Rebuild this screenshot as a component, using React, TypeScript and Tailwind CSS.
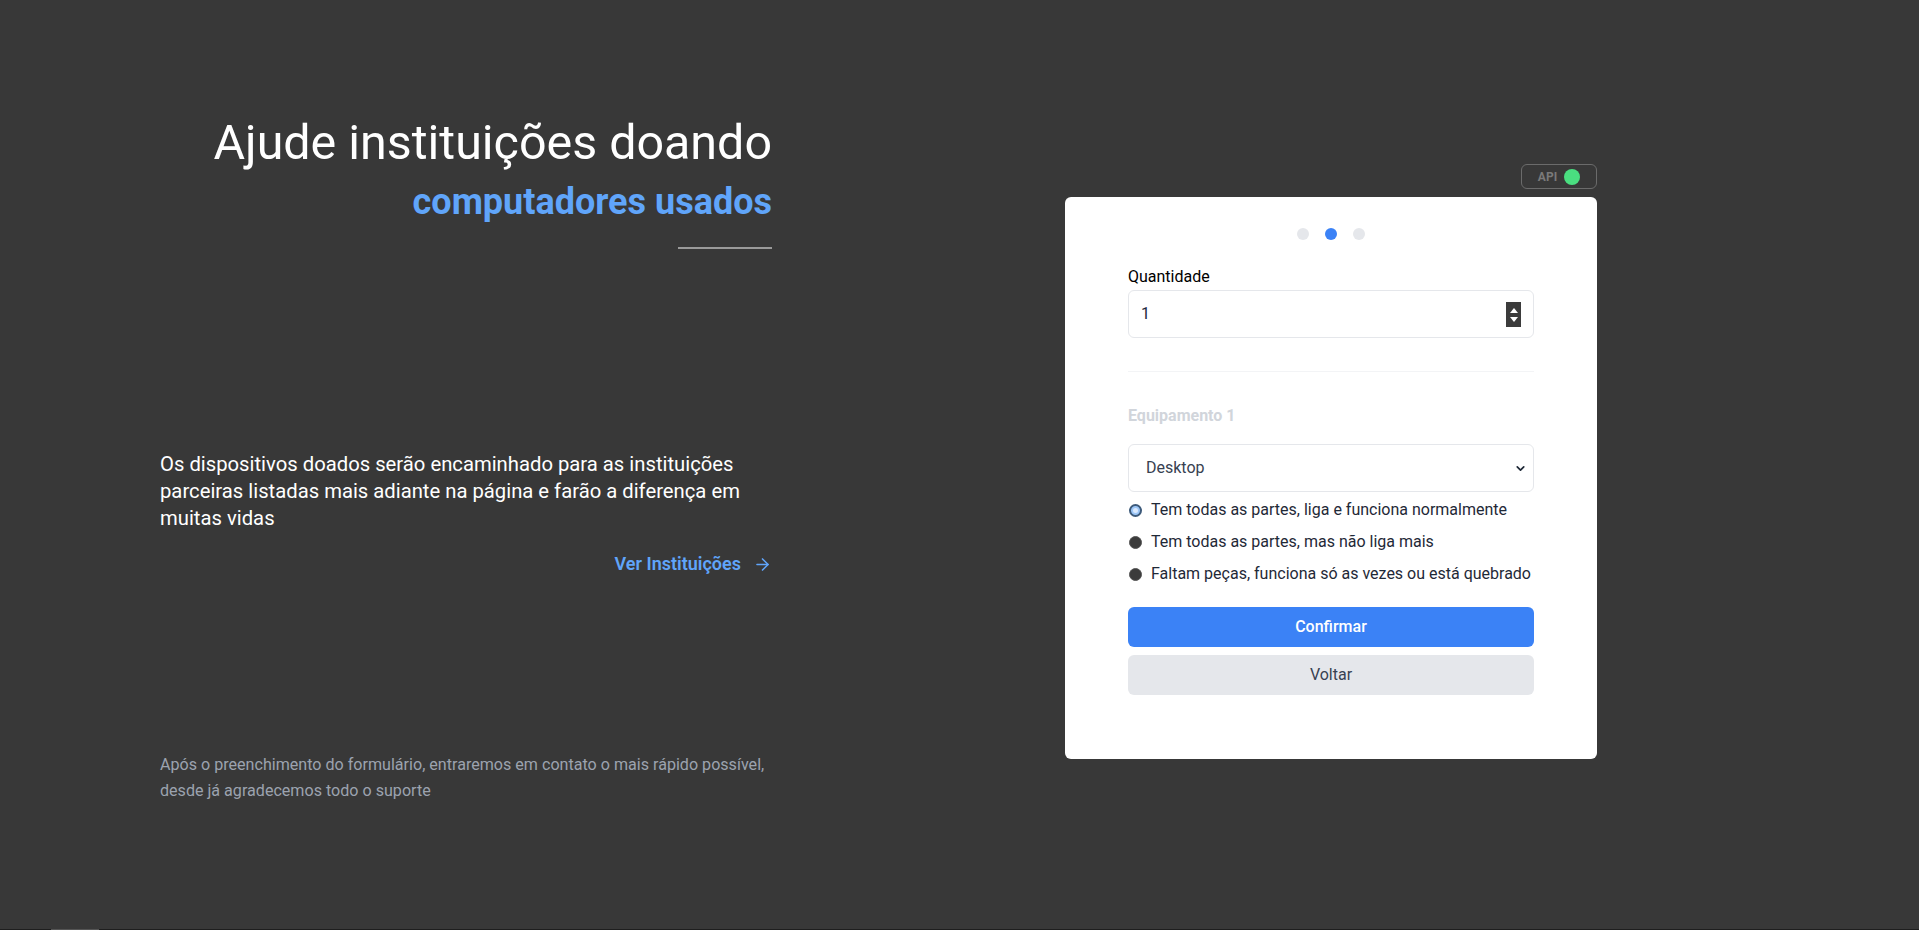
import React from "react";
import { ArrowRight, ChevronDown } from "lucide-react";

export default function App() {
  return (
    <div className="relative flex h-[930px] w-full flex-col overflow-hidden bg-[#383838] [font-family:Roboto,'Noto_Sans',sans-serif]">
      <main className="flex flex-1 pl-[160px]">
        {/* Left column */}
        <section className="flex w-[612px] flex-col pt-[119px]">
          <h1 className="text-right text-[48.4px] font-normal leading-[48px] text-white">
            Ajude instituições doando
          </h1>
          <h2 className="mt-[15px] text-right text-[36px] font-bold leading-[40px] text-[#60a5fa]">
            computadores usados
          </h2>
          <div className="mt-[25px] flex justify-end">
            <div className="h-[2px] w-[94px] bg-[#9a9a9a]" />
          </div>
          <p className="mt-[202px] text-[20.25px] leading-[27px] text-white">
            Os dispositivos doados serão encaminhado para as instituições parceiras listadas mais
            adiante na página e farão a diferença em muitas vidas
          </p>
          <div className="mt-[20px] flex justify-end">
            <a className="flex items-center gap-3 text-[18px] font-semibold leading-6 text-[#60a5fa]">
              Ver Instituições
              <ArrowRight size={19} strokeWidth={2} />
            </a>
          </div>
          <p className="mt-[176px] text-[16.1px] leading-[26px] text-[#9ca3af]">
            Após o preenchimento do formulário, entraremos em contato o mais rápido possível, desde
            já agradecemos todo o suporte
          </p>
        </section>

        {/* Right column */}
        <section className="ml-[293px] flex w-[532px] flex-col pt-[164px]">
          <div className="flex justify-end">
            <div className="flex h-[25px] w-[76px] items-center justify-center gap-[7px] rounded-md border border-[#6b6b6b]">
              <span className="text-[12px] font-bold leading-none text-[#7a7a7a]">API</span>
              <span className="h-[16px] w-[16px] rounded-full bg-[#4ade80]" />
            </div>
          </div>

          <div className="mt-[8px] flex flex-col rounded-md bg-white px-[63px] pb-[64px] pt-[31px]">
            <div className="flex justify-center gap-4">
              <span className="h-[12px] w-[12px] rounded-full bg-[#e5e7eb]" />
              <span className="h-[12px] w-[12px] rounded-full bg-[#3b82f6]" />
              <span className="h-[12px] w-[12px] rounded-full bg-[#e5e7eb]" />
            </div>

            <label className="mt-[25px] text-[16px] leading-6 text-black">Quantidade</label>
            <div className="relative mt-px flex h-12 items-center rounded-md border border-[#e5e7eb] pl-3">
              <span className="text-[16px] text-[#1e293b]">1</span>
              <div className="absolute right-[12px] top-[11px] flex h-[25px] w-[15px] flex-col items-center justify-center gap-[4px] bg-[#3b3b3b]">
                <svg width="8" height="5" viewBox="0 0 8 5">
                  <path d="M4 0L8 5H0Z" fill="#fff" />
                </svg>
                <svg width="8" height="5" viewBox="0 0 8 5">
                  <path d="M0 0H8L4 5Z" fill="#fff" />
                </svg>
              </div>
            </div>

            <div className="mt-[33px] h-px bg-[#f3f4f6]" />

            <h3 className="mt-[32px] text-[16px] font-bold leading-6 text-[#d1d5db]">Equipamento 1</h3>

            <div className="relative mt-[16px] flex h-12 items-center rounded-md border border-[#e5e7eb] pl-[17px]">
              <span className="text-[16px] text-[#374151]">Desktop</span>
              <ChevronDown
                size={13}
                strokeWidth={3.2}
                className="absolute right-[6px] top-[17px] text-[#1f2937]"
              />
            </div>

            <div className="mt-[6px] flex flex-col gap-2">
              <div className="flex items-center gap-[9px] text-[16px] leading-6 text-[#1f2937]">
                <span className="ml-[1px] flex h-[13px] w-[13px] items-center justify-center rounded-full border-[2px] border-[#3d5a7a] bg-[#9cc6f7]">
                  <span className="h-[5px] w-[5px] rounded-full bg-[#dbeafe]" />
                </span>
                Tem todas as partes, liga e funciona normalmente
              </div>
              <div className="flex items-center gap-[9px] text-[16px] leading-6 text-[#1f2937]">
                <span className="ml-[1px] h-[13px] w-[13px] rounded-full border border-[#555] bg-[#3b3b3b]" />
                Tem todas as partes, mas não liga mais
              </div>
              <div className="flex items-center gap-[9px] text-[16px] leading-6 text-[#1f2937]">
                <span className="ml-[1px] h-[13px] w-[13px] rounded-full border border-[#555] bg-[#3b3b3b]" />
                Faltam peças, funciona só as vezes ou está quebrado
              </div>
            </div>

            <button className="mt-[21px] h-10 rounded-md bg-[#3b82f6] text-[16px] font-medium text-white">
              Confirmar
            </button>
            <button className="mt-2 h-10 rounded-md bg-[#e5e7eb] text-[16px] text-[#374151]">
              Voltar
            </button>
          </div>
        </section>
      </main>
      <div className="flex h-px bg-[#1e1e1e]">
        <div className="ml-[51px] w-[48px] bg-[#555]" />
      </div>
    </div>
  );
}
